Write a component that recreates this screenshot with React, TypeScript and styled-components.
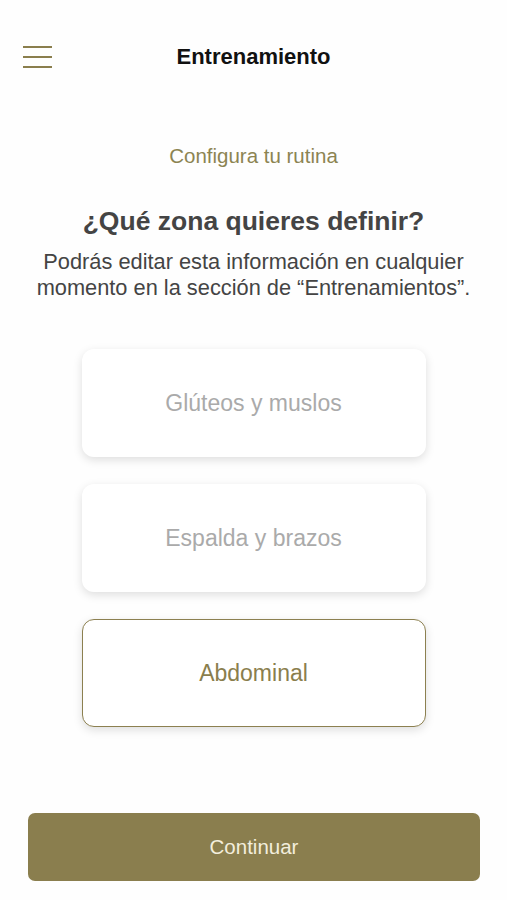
import React, { useState } from "react";
import styled, { createGlobalStyle } from "styled-components";

const Global = createGlobalStyle`
  html, body { margin: 0; padding: 0; background: #fefefe; }
  body { font-family: "Liberation Sans", Arial, sans-serif; }
  * { box-sizing: border-box; }
`;

const Page = styled.div`
  min-height: 900px;
  display: flex;
  flex-direction: column;
  background: #fefefe;
`;

const Header = styled.header`
  position: relative;
  height: 44px;
  margin-top: 36px;
  display: flex;
  align-items: center;
  justify-content: center;
`;

const MenuButton = styled.button`
  position: absolute;
  left: 23px;
  top: 10px;
  width: 29px;
  height: 22px;
  padding: 0;
  border: none;
  background: transparent;
  display: flex;
  flex-direction: column;
  justify-content: space-between;
  span {
    display: block;
    height: 2px;
    background: #8a7e4d;
  }
`;

const Title = styled.h1`
  margin: 0;
  font-size: 22px;
  line-height: 26px;
  font-weight: 700;
  color: #111;
  transform: translateY(-1px);
`;

const Content = styled.main`
  display: flex;
  flex-direction: column;
  align-items: center;
  text-align: center;
  padding-top: 64px;
`;

const Kicker = styled.div`
  font-size: 20.5px;
  line-height: 24px;
  color: #8c8452;
`;

const Question = styled.h2`
  margin: 38px 0 0;
  font-size: 26.5px;
  line-height: 30px;
  font-weight: 700;
  color: #444;
`;

const Lead = styled.p`
  margin: 13px 0 0;
  font-size: 21.8px;
  line-height: 26px;
  color: #444;
`;

const Options = styled.div`
  display: flex;
  flex-direction: column;
  gap: 27px;
  margin-top: 48px;
  width: 344px;
`;

const Option = styled.button<{ $selected: boolean }>`
  height: 108px;
  border-radius: 12px;
  background: #fff;
  border: ${(p) => (p.$selected ? "1.5px solid #8c8050" : "1.5px solid transparent")};
  box-shadow: 0 3px 10px rgba(0, 0, 0, 0.13);
  font-family: "Liberation Sans", Arial, sans-serif;
  font-size: 23px;
  color: ${(p) => (p.$selected ? "#8a7e4d" : "#aaaaaa")};
  cursor: pointer;
`;

const Footer = styled.div`
  margin-top: auto;
  padding: 0 27px 19px 28px;
`;

const Continue = styled.button`
  width: 100%;
  height: 68px;
  border: none;
  border-radius: 7px;
  background: #8a7e4e;
  color: #f3eedd;
  font-family: "Liberation Sans", Arial, sans-serif;
  font-size: 20.5px;
`;

const options = ["Glúteos y muslos", "Espalda y brazos", "Abdominal"];

export default function App() {
  const [selected, setSelected] = useState(2);
  return (
    <Page>
      <Global />
      <Header>
        <MenuButton aria-label="menu">
          <span />
          <span />
          <span />
        </MenuButton>
        <Title>Entrenamiento</Title>
      </Header>
      <Content>
        <Kicker>Configura tu rutina</Kicker>
        <Question>¿Qué zona quieres definir?</Question>
        <Lead>
          Podrás editar esta información en cualquier
          <br />
          momento en la sección de “Entrenamientos”.
        </Lead>
        <Options>
          {options.map((o, i) => (
            <Option key={o} $selected={selected === i} onClick={() => setSelected(i)}>
              {o}
            </Option>
          ))}
        </Options>
      </Content>
      <Footer>
        <Continue>Continuar</Continue>
      </Footer>
    </Page>
  );
}
